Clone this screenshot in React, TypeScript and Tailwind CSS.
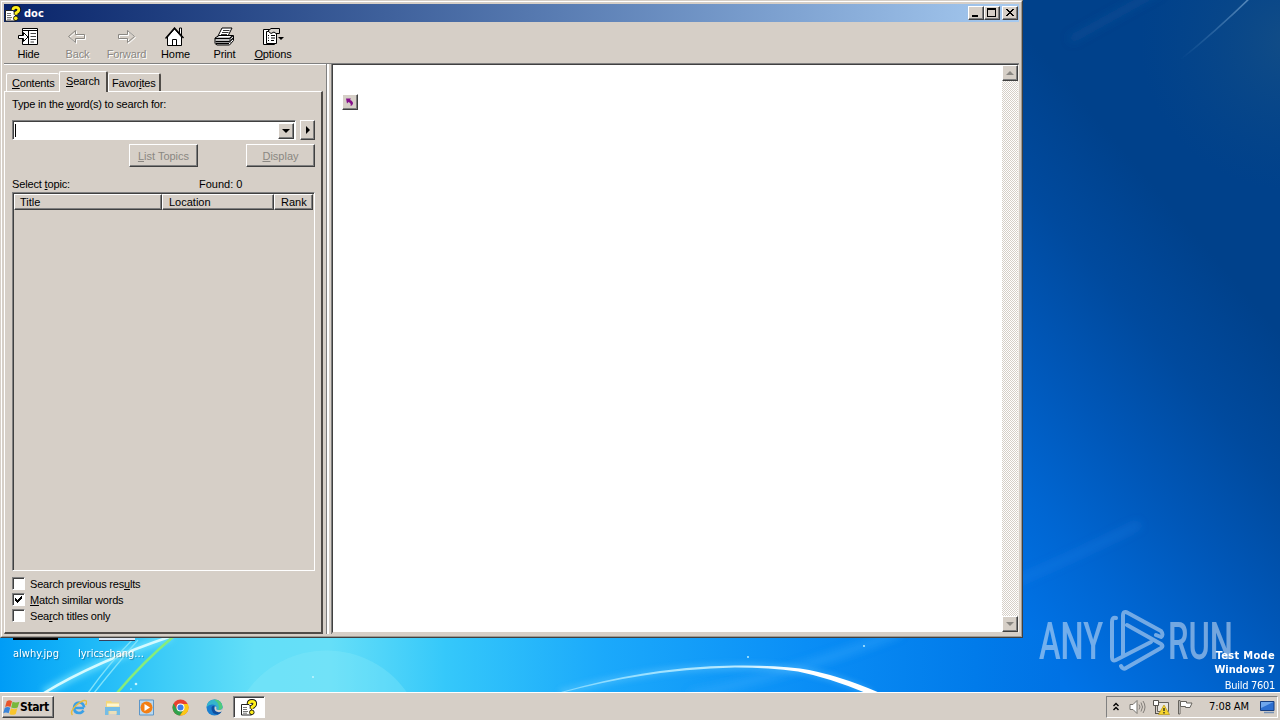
import type { ReactNode } from "react";

const raised =
  "border border-t-white border-l-white border-b-[#404040] border-r-[#404040] shadow-[inset_-1px_-1px_0_#808080] bg-[#d6cfc7]";
const sunken =
  "border border-t-[#808080] border-l-[#808080] border-b-white border-r-white shadow-[inset_1px_1px_0_#404040]";

function Wallpaper() {
  return (
    <svg className="absolute inset-0" width="1280" height="720" viewBox="0 0 1280 720">
      <defs>
        <linearGradient id="side" x1="1024" y1="640" x2="1324" y2="385" gradientUnits="userSpaceOnUse">
          <stop offset="0" stopColor="#0074e8" />
          <stop offset="0.25" stopColor="#0066d2" />
          <stop offset="0.5" stopColor="#0057b8" />
          <stop offset="0.75" stopColor="#004a9e" />
          <stop offset="1" stopColor="#00418b" />
        </linearGradient>
        <radialGradient id="corner" cx="1290" cy="40" r="150" gradientUnits="userSpaceOnUse">
          <stop offset="0" stopColor="#144e86" stopOpacity="0.9" />
          <stop offset="1" stopColor="#0a4888" stopOpacity="0" />
        </radialGradient>
        <linearGradient id="low" x1="0" y1="0" x2="1060" y2="0" gradientUnits="userSpaceOnUse">
          <stop offset="0" stopColor="#009cf6" />
          <stop offset="0.07" stopColor="#16b4f8" />
          <stop offset="0.15" stopColor="#3bcbf8" />
          <stop offset="0.24" stopColor="#63dff8" />
          <stop offset="0.31" stopColor="#66dff8" />
          <stop offset="0.42" stopColor="#35c8fa" />
          <stop offset="0.57" stopColor="#1ba9fb" />
          <stop offset="0.76" stopColor="#0a8ef6" />
          <stop offset="0.92" stopColor="#017bea" />
          <stop offset="1" stopColor="#0072e4" />
        </linearGradient>
        <linearGradient id="arc" x1="560" y1="0" x2="875" y2="0" gradientUnits="userSpaceOnUse">
          <stop offset="0" stopColor="#7fd8ff" />
          <stop offset="0.55" stopColor="#b9eaff" />
          <stop offset="0.75" stopColor="#fff" />
        </linearGradient>
        <linearGradient id="ray" x1="1180" y1="60" x2="1250" y2="0" gradientUnits="userSpaceOnUse">
          <stop offset="0" stopColor="#5088be" stopOpacity="0" />
          <stop offset="1" stopColor="#6a9ac8" stopOpacity="0.8" />
        </linearGradient>
        <filter id="soft">
          <feGaussianBlur stdDeviation="0.7" />
        </filter>
        <filter id="wide" x="-20%" y="-50%" width="140%" height="200%">
          <feGaussianBlur stdDeviation="4" />
        </filter>
        <filter id="glow" x="-20%" y="-50%" width="140%" height="200%">
          <feGaussianBlur stdDeviation="3" />
        </filter>
      </defs>
      <rect width="1280" height="720" fill="url(#side)" />
      <rect width="1280" height="200" fill="url(#corner)" />
      <rect y="630" width="1060" height="64" fill="url(#low)" />
      <path d="M1180 60Q1215 32 1252 -4" stroke="url(#ray)" strokeWidth="1.6" fill="none" filter="url(#soft)" />
      <g fill="none" filter="url(#wide)">
        <path d="M1070 40L1160 -10" stroke="#1c5ca0" strokeWidth="8" opacity="0.35" />
        <path d="M1010 584Q1080 554 1140 524" stroke="#2a8cf0" strokeWidth="8" opacity="0.25" />
        <path d="M690 695Q790 675 900 632" stroke="#4ab4ff" strokeWidth="8" opacity="0.35" />
      </g>
      <path d="M245 694A98 98 0 0 1 408 694Z" fill="#8aebfa" opacity="0.3" />
      <path d="M44 693Q95 662 172 636" stroke="#8beeff" strokeWidth="8" opacity="0.6" fill="none" filter="url(#glow)" />
      <path d="M44 693Q95 662 172 636" stroke="#d4faff" strokeWidth="2.6" fill="none" filter="url(#soft)" />
      <path d="M88 693Q110 662 136 636M94 693Q112 670 138 640" stroke="#7fe3fb" strokeWidth="1.3" fill="none" />
      <path d="M117 693Q143 662 174 636" stroke="#86ec7c" strokeWidth="2.6" fill="none" filter="url(#soft)" />
      <path d="M560 693Q650 667 735 667Q815 664 872 694" stroke="#7fd3ff" strokeWidth="6" opacity="0.4" fill="none" filter="url(#glow)" />
      <path
        d="M561 692Q650 666.500 735 665.500Q772 665 800 668.500Q836 674 880 693L866 693Q830 678 798 671.500Q770 667.500 735 667.500Q650 669 561 693Z"
        fill="url(#arc)"
        filter="url(#soft)"
      />
      <g fill="#c9f6ff">
        <circle cx="136" cy="684" r="1.3" />
        <circle cx="131" cy="689" r="0.8" />
        <circle cx="748" cy="657" r="0.9" />
        <circle cx="864" cy="646" r="0.9" />
        <circle cx="313" cy="677" r="0.9" />
      </g>
    </svg>
  );
}

function Watermark() {
  return (
    <svg className="absolute left-[1030px] top-[604px]" width="210" height="74" viewBox="1030 604 210 74">
      <g opacity="0.5" fill="#e6eef8" stroke="none" fontFamily="Roboto, sans-serif" fontSize="51" fontWeight="500">
        <text x="1039" y="659" textLength="64" lengthAdjust="spacingAndGlyphs">ANY</text>
        <text x="1168" y="659" textLength="65" lengthAdjust="spacingAndGlyphs">RUN</text>
      </g>
      <g opacity="0.5" fill="none" stroke="#e6eef8" strokeWidth="4" strokeLinejoin="round" strokeLinecap="round">
        <path d="M1116 618Q1112 617 1112 622V657Q1112 662 1116 660L1151 642" />
        <path d="M1123 655V616Q1123 610 1128 613L1161 631Q1164 635 1161 637L1156 635" />
        <path d="M1127 625L1161 644Q1164 646 1161 648L1126 668Q1123 670 1121 666" />
      </g>
    </svg>
  );
}

function HelpIcon() {
  const hook = "M8 5Q8 2.300 11 2.300Q13.800 2.300 13.800 4.800Q13.800 6.500 11 8V9.800";
  return (
    <svg width="17" height="17" viewBox="0 0 17 17" className="shrink-0">
      <path d="M.5 5.500H8L10.500 8V16H.5Z" fill="#fff" stroke="#222" />
      <path d="M2 8.500H6M2 10.500H6M2 12.500H7M2 14.200H6" stroke="#777" />
      <path d={hook} fill="none" stroke="#111" strokeWidth="4.600" />
      <path d={hook} fill="none" stroke="#fff01c" strokeWidth="2.800" />
      <circle cx="10.800" cy="13.300" r="2.300" fill="#fff01c" stroke="#111" strokeWidth=".9" />
    </svg>
  );
}

function TitleButton({ children, className = "" }: { children: ReactNode; className?: string }) {
  return (
    <button className={`w-4 h-[14px] flex items-center justify-center ${raised} ${className}`}>
      <svg width="12" height="10" viewBox="0 0 12 10" className="shrink-0" shapeRendering="crispEdges">
        {children}
      </svg>
    </button>
  );
}

function TitleBar() {
  return (
    <div className="h-[18px] flex items-center pl-px pr-px bg-linear-to-r from-[#0a246a] to-[#a6caf0]">
      <HelpIcon />
      <span className="ml-[2px] mt-px flex-1 font-['DejaVu_Sans_Condensed','DejaVu_Sans',sans-serif] text-[11px] leading-4 font-bold text-white">
        doc
      </span>
      <TitleButton>
        <path d="M2 7h6v2H2z" />
      </TitleButton>
      <TitleButton>
        <path d="M1 0h9v9H1zM2 2v6h7V2z" fillRule="evenodd" />
      </TitleButton>
      <TitleButton className="ml-0.5">
        <path d="M2 1h2v1h1v1h2V2h1V1h2v1H9v1H8v1H7v1h1v1h1v1h1v1H8V7H7V6H5v1H4v1H2V7h1V6h1V5h1V4H4V3H3V2H2z" />
      </TitleButton>
    </div>
  );
}

const arrowLeft = "M1.500 9.500L8.500 3.500V7.500H17.500V11.500H8.500V15.500Z";
const arrowRight = "M18.500 9.500L11.500 3.500V7.500H2.500V11.500H11.500V15.500Z";

const tools = [
  {
    label: <>Hide</>,
    width: "w-[49px]",
    icon: (
      <>
        <path d="M4.500 1.500H19.500V17.500H4.500ZM4 3.500H20M10.500 3V18" fill="#fff" stroke="#000" />
        <path d="M12.500 6.500H18M12.500 9.500H18M12.500 12.500H18M12.500 15H16" stroke="#444" />
        <path d="M.5 8.500H5.500V5.500L10 10L5.500 14.500V11.500H.5Z" fill="#fff" stroke="#000" />
      </>
    ),
  },
  {
    label: <>Back</>,
    width: "w-[49px]",
    off: true,
    icon: (
      <>
        <path d={arrowLeft} transform="translate(1 1)" fill="none" stroke="#fff" />
        <path d={arrowLeft} fill="none" stroke="#8a8782" />
      </>
    ),
  },
  {
    label: <>Forward</>,
    width: "w-[49px]",
    off: true,
    icon: (
      <>
        <path d={arrowRight} transform="translate(1 1)" fill="none" stroke="#fff" />
        <path d={arrowRight} fill="none" stroke="#8a8782" />
      </>
    ),
  },
  {
    label: <>Home</>,
    width: "w-[49px]",
    icon: (
      <>
        <path d="M14.500 6V1H16.500V9" fill="#fff" stroke="#000" />
        <path d="M2.500 10V18.500H16.500V10L9.500 2Z" fill="#fff" stroke="#000" />
        <path d="M.5 11.500L9.500 1L18.500 11" fill="none" stroke="#000" strokeWidth="1.4" />
        <path d="M7.500 18V12.500H11.500V18" fill="#fff" stroke="#000" />
      </>
    ),
  },
  {
    label: <>Print</>,
    width: "w-[49px]",
    icon: (
      <>
        <path d="M8 1L18 1L14 9H4Z" fill="#fff" stroke="#000" />
        <path d="M9 3.500H15.500M8 5.500H14.500M7 7.500H13" stroke="#000" strokeWidth=".8" />
        <path d="M1 11L5 8.500H19.500V13.500L15.500 18H3L1 16.500Z" fill="#fff" stroke="#000" />
        <path d="M1 11.500H15.500L19 8.500M1.500 14.500H15.500L19.500 11" fill="none" stroke="#000" strokeWidth="1.3" />
        <path d="M2 16.500H15" stroke="#000" strokeWidth="1.4" />
        <path d="M16 11v5" stroke="#333" />
      </>
    ),
  },
  {
    label: (
      <>
        <u>O</u>ptions
      </>
    ),
    width: "w-[48px]",
    icon: (
      <>
        <path d="M.5 2.500H11.500V17.500H.5Z" fill="#fff" stroke="#000" />
        <path d="M3.500 4.500H13.500V16.500H3.500Z" fill="#fff" stroke="#000" />
        <path d="M5 8.500H6M8 8.500H12M5 11H6M8 11H12M5 13.500H6M8 13.500H11" stroke="#000" />
        <path d="M5 4L8 1.500H16.500V6.500H13L11 5L8 6.500Z" fill="#d8d4ce" stroke="#000" />
        <path d="M15 10h6l-3 3z" fill="#000" />
      </>
    ),
  },
];

function Toolbar() {
  return (
    <div className="h-[42px] flex border-b border-[#808080]">
      {tools.map((tool, i) => (
        <button
          key={i}
          className={`${tool.width} shrink-0 pt-[5px] flex flex-col items-center text-[11px] leading-3 ${
            tool.off ? "text-[#8a8782] [text-shadow:1px_1px_0_#fff]" : "text-black"
          }`}
        >
          <svg width="21" height="20" viewBox="0 0 21 20">
            {tool.icon}
          </svg>
          <span className="mt-px tracking-[-0.1px]">{tool.label}</span>
        </button>
      ))}
    </div>
  );
}

function Tabs() {
  const side =
    "h-[18px] mt-0.5 pt-[2px] border-t border-l border-t-white border-l-white border-r-[#504c48] rounded-t-[2px]";
  return (
    <div className="relative z-10 h-5 flex items-start pl-[2px] text-[11px] leading-[14px] tracking-[-0.2px] whitespace-nowrap">
      <div className={`${side} w-[53px] pl-[5px]`}>
        <u>C</u>ontents
      </div>
      <div className="w-[49px] h-[21px] pt-[2px] pl-[6px] bg-[#d6cfc7] border-t border-l border-t-white border-l-white border-r-2 border-r-[#504c48] rounded-t-[2px]">
        <u>S</u>earch
      </div>
      <div className={`${side} w-[53px] pl-[3px] border-r-2`}>
        Favor<u>i</u>tes
      </div>
    </div>
  );
}

const options = [
  { checked: false, label: <>Search previous res<u>u</u>lts</> },
  { checked: true, label: <><u>M</u>atch similar words</> },
  { checked: false, label: <>Sea<u>r</u>ch titles only</> },
];

function SearchPanel() {
  return (
    <div className="h-[543px] w-[319px] pl-[7px] pt-[4px] border-t border-l border-t-white border-l-white border-r-2 border-b-2 border-r-[#504c48] border-b-[#504c48] text-[11px] leading-4 whitespace-nowrap">
      <div className="h-4 tracking-[-0.2px]">
        Type in the <u>w</u>ord(s) to search for:
      </div>
      <div className="mt-[8px] flex gap-1">
        <div className={`w-[284px] h-5 p-px flex justify-between bg-white ${sunken}`}>
          <span className="mt-[2px] ml-px w-px h-[13px] bg-black" />
          <button className={`mt-px w-4 h-4 flex items-center justify-center ${raised}`}>
            <svg width="8" height="4" viewBox="0 0 8 4">
              <path d="M0 0h8L4 4z" />
            </svg>
          </button>
        </div>
        <button className={`w-[15px] h-5 flex items-center justify-center ${raised}`}>
          <svg width="4" height="8" viewBox="0 0 4 8">
            <path d="M0 0v8l4-4z" />
          </svg>
        </button>
      </div>
      <div className="mt-[4px] flex pl-[117px] gap-12 text-[#8a8782] [text-shadow:1px_1px_0_#fff]">
        <button className={`w-[69px] h-[23px] ${raised}`}>
          <u>L</u>ist Topics
        </button>
        <button className={`w-[69px] h-[23px] ${raised}`}>
          <u>D</u>isplay
        </button>
      </div>
      <div className="mt-[9px] flex">
        <span className="w-[187px] tracking-[-0.15px]">
          Select <u>t</u>opic:
        </span>
        <span>Found: 0</span>
      </div>
      <div className={`w-[303px] h-[379px] p-px ${sunken}`}>
        <div className="flex h-4">
          <div className={`w-[148px] pl-[5px] leading-[15px] ${raised}`}>Title</div>
          <div className={`w-[112px] pl-[6px] leading-[15px] ${raised}`}>Location</div>
          <div className={`w-[39px] pl-[6px] leading-[15px] ${raised}`}>Rank</div>
        </div>
      </div>
      <div className="mt-[5px] tracking-[-0.2px]">
        {options.map((option, i) => (
          <label key={i} className="h-4 flex items-start">
            <span className={`mt-px w-[13px] h-[13px] bg-white ${sunken}`}>
              {option.checked && (
                <svg width="11" height="11" viewBox="0 0 11 11" shapeRendering="crispEdges">
                  <path d="M2 4h1v1h1v1h1V5h1V4h1V3h1V2h1v3H8v1H7v1H6v1H5v1H4V8H3V7H2z" />
                </svg>
              )}
            </span>
            <span className="ml-[5px] leading-4">{option.label}</span>
          </label>
        ))}
      </div>
    </div>
  );
}

function ContentPane() {
  return (
    <div className="flex-1 mb-px flex border border-t-[#404040] border-l-[#404040] border-r-[#f2efeb] border-b-[#d6cfc7] bg-white">
      <div className="flex-1 pt-[29px] pl-[9px]">
        <button className={`w-4 h-4 flex items-center justify-center ${raised}`}>
          <svg width="10" height="10" viewBox="0 0 10 10">
            <path d="M1 1.500H6L5 3Q8 4 8 6.500Q7.500 8.500 5.500 9Q6.500 6.500 3.500 5L2 6.500Z" fill="#85108a" />
          </svg>
        </button>
      </div>
      <div className="w-4 flex flex-col justify-between bg-[repeating-conic-gradient(#d6cfc7_0_25%,#fff_0_50%)] bg-[length:2px_2px]">
        <button className={`h-4 flex items-center justify-center ${raised}`}>
          <svg width="8" height="4" viewBox="0 0 8 4">
            <path d="M0 4h8L4 0z" fill="#8a8782" />
          </svg>
        </button>
        <button className={`h-4 flex items-center justify-center ${raised}`}>
          <svg width="8" height="4" viewBox="0 0 8 4">
            <path d="M0 0h8L4 4z" fill="#8a8782" />
          </svg>
        </button>
      </div>
    </div>
  );
}

function HelpWindow() {
  return (
    <div className="absolute left-0 top-0 w-[1023px] h-[638px] border border-t-[#d6cfc7] border-l-[#d6cfc7] border-r-[#404040] border-b-[#404040] bg-[#d6cfc7]">
      <div className="h-full border border-t-white border-l-white border-r-[#a09a92] border-b-[#a09a92] p-0.5 flex flex-col">
        <TitleBar />
        <Toolbar />
        <div className="flex-1 min-h-0 flex">
          <div className="w-[322px] shrink-0 border-t border-white pt-[6px]">
            <Tabs />
            <SearchPanel />
          </div>
          <div className="w-[3px] shrink-0 border-l border-[#808080] bg-white" />
          <div className="w-[3px] shrink-0 border-r border-[#808080]" />
          <ContentPane />
        </div>
      </div>
    </div>
  );
}

const pinned = [
  // Internet Explorer
  <>
    <path d="M14 9H4Q4.500 3.500 9 3.500Q13.500 3.500 14.200 8.500M4 9Q4.500 14 9 14Q12 14 13.500 11.500" fill="none" stroke="#3aa0e6" strokeWidth="2.600" />
    <path d="M2.500 16Q-.5 13 6 6.500Q13.500 0 16.300 2Q17.300 3.500 15.500 6" fill="none" stroke="#e9bd3c" strokeWidth="1.500" />
  </>,
  // Explorer
  <>
    <path d="M2 2h5l1 1.500h7V15H2z" fill="#f3d77a" />
    <path d="M3 4.500h12v3H3z" fill="#fff6cf" />
    <path d="M1 8h15V16h-3.500v-4h-8V16H1z" fill="#76bde6" />
    <path d="M5.500 12h7v3h-7z" fill="#eadfbb" />
  </>,
  // Media Player
  <>
    <path d="M1.500 1h14v15h-14z" fill="#b9d8ef" stroke="#5c96c8" />
    <circle cx="8.500" cy="8.500" r="6" fill="#f37f14" />
    <path d="M6.500 5v7l5.500-3.500z" fill="#fff" />
  </>,
  // Chrome
  <>
    <circle cx="8.500" cy="8.500" r="8" fill="#e8412f" />
    <path d="M1.600 4.500A8 8 0 0 0 8 16.500L11.800 10.500L5 10.500Z" fill="#2fa24c" />
    <path d="M8 16.500A8 8 0 0 0 15.800 5H8.500L12 10.500Z" fill="#fbc916" />
    <circle cx="8.500" cy="8.500" r="4" fill="#fff" />
    <circle cx="8.500" cy="8.500" r="3" fill="#3b7de8" />
  </>,
  // Edge
  <>
    <circle cx="8.500" cy="8.500" r="8" fill="#1b7fd0" />
    <path d="M.7 7Q2 .5 8.500 .5Q15.500 .8 16.500 7.500Q16.500 11 12.500 11Q9.800 10.500 10.500 8.800Q10.500 6 7 5.500Q3 5 .7 8Z" fill="#35b5cc" />
    <path d="M8 .5Q15.500 .5 16.500 7.500Q16.500 11 12.500 11Q14.500 5 8 .5Z" fill="#4fcb7c" />
    <path d="M5.500 8.500Q5 15 12 15.500Q14.500 14.500 15.800 12.500Q12 14 9.500 12Q7.500 10.500 8.500 7Q6.500 6 5.500 8.500Z" fill="#104f9f" />
    <path d="M8.700 7.500Q10.500 7 10.500 8.800Q9.800 11 12.500 11Q15 11.500 16.300 9.500L15.800 12.500Q12 14 9.500 12Q8 10 8.700 7.500Z" fill="#d6cfc7" />
  </>,
];

function Taskbar() {
  return (
    <div className="absolute left-0 bottom-0 w-full h-7 flex items-start pt-[3px] pl-0.5 bg-[#d6cfc7] border-t border-white">
      <button
        className={`w-[52px] h-[22px] flex items-center font-['DejaVu_Sans_Condensed','DejaVu_Sans',sans-serif] text-[12px] font-bold ${raised}`}
      >
        <svg width="17" height="17" viewBox="0 0 16 16" className="shrink-0">
          <path d="M3.500 2Q6 .3 8.500 2L7 7.500Q4.500 6 2 7.500Z" fill="#e8552b" />
          <path d="M9 2.500Q12 4 15.500 2.500L13.800 8Q11 9.500 7.700 8Z" fill="#78b83c" />
          <path d="M1.700 8.200Q4.500 6.800 6.800 8.200L5.300 13.500Q2.800 12 .2 13.500Z" fill="#3a84d8" />
          <path d="M7.500 8.800Q10.500 10.300 13.500 8.800L12 14Q9 15.800 6 14Z" fill="#f8c52c" />
        </svg>
        <span className="tracking-[-0.4px]">Start</span>
      </button>
      <div className="ml-[16px] h-[22px] flex items-center gap-[17px]">
        {pinned.map((icon, i) => (
          <svg key={i} width="17" height="17" viewBox="0 0 17 17">
            {icon}
          </svg>
        ))}
      </div>
      <button className={`ml-[10px] w-[32px] h-[22px] flex items-center justify-center bg-white ${sunken}`}>
        <HelpIcon />
      </button>
      <div className="ml-auto mr-[2px] w-[172px] h-[22px] flex items-center pl-[5px] border border-t-[#808080] border-l-[#808080] border-b-white border-r-white">
        <svg width="8" height="10" viewBox="0 0 8 10" fill="none" stroke="#000" strokeWidth="1.400">
          <path d="M1.500 4L4 1.500L6.500 4M1.500 8L4 5.500L6.500 8" />
        </svg>
        <svg className="ml-[9px]" width="17" height="16" viewBox="0 0 17 16" fill="none" stroke="#77746f">
          <path d="M1 5.500H4L8 1.500V14.500L4 10.500H1Z" fill="#fff" />
          <path d="M10 5.500Q12 8 10 10.500M12 3.500Q15 8 12 12.500M14 2Q18 8 14 14" strokeWidth=".9" />
        </svg>
        <svg className="ml-[7px]" width="17" height="16" viewBox="0 0 17 16">
          <path d="M4.500 3.500H15.500V12.500H4.500Z" fill="#e9e6e0" stroke="#66635d" />
          <path d="M.5 1.500H5.500V6.500H.5ZM2.500 7V15M2 14.500H6" fill="#fff" stroke="#55524d" />
          <path d="M11 6L16.500 15.500H5.500Z" fill="#f6d52b" stroke="#b89716" strokeWidth=".7" />
          <path d="M11 9v3M11 13v1.500" stroke="#222" strokeWidth="1.300" />
        </svg>
        <svg className="ml-[7px]" width="17" height="16" viewBox="0 0 17 16" fill="#fff" stroke="#66635d">
          <path d="M1.500 1.500H3V15H1.500Z" />
          <path d="M3.500 2.500H9.500V4H15L13 8.500H8.500V7.500H3.500Z" />
        </svg>
        <span className="ml-[15px] w-[42px] whitespace-nowrap text-[11px] font-['DejaVu_Sans_Condensed',sans-serif] tracking-[-0.1px]">
          7:08 AM
        </span>
        <svg className="ml-[9px]" width="15" height="14" viewBox="0 0 15 14">
          <path d="M.5 1.500H14V10.500H.5Z" fill="#2d6fd0" stroke="#173e80" />
          <path d="M1 2H13.500L1 8Z" fill="#6fa6ec" />
          <path d="M4 12.500H14" stroke="#7691b5" strokeWidth="1.500" />
        </svg>
      </div>
    </div>
  );
}

export default function App() {
  return (
    <div className="relative w-[1280px] h-[720px] overflow-hidden font-['Liberation_Sans',Arial,sans-serif] text-black">
      <Wallpaper />
      <div className="absolute left-[13px] top-[637px] w-[45px] h-[3px] bg-black" />
      <div className="absolute left-[99px] top-[636px] w-9 h-[5px] bg-[#dce8f5] border-b border-[#38405a]" />
      <div className="absolute left-[13px] top-[647px] text-[11px] leading-[14px] text-white font-['DejaVu_Sans_Condensed',sans-serif] [text-shadow:1px_1px_1px_#0005]">
        alwhy.jpg
      </div>
      <div className="absolute left-[78px] top-[647px] text-[11px] leading-[14px] text-white font-['DejaVu_Sans_Condensed',sans-serif] [text-shadow:1px_1px_1px_#0005]">
        lyricschang...
      </div>
      <Watermark />
      <div className="absolute right-[5px] top-[649px] text-right text-[11px] leading-[14px] text-white font-['DejaVu_Sans_Condensed',sans-serif]">
        <div className="font-bold tracking-[0.3px]">Test Mode</div>
        <div className="font-bold">Windows 7</div>
        <div className="mt-[2px] tracking-[-0.3px]">Build 7601</div>
      </div>
      <HelpWindow />
      <Taskbar />
    </div>
  );
}
